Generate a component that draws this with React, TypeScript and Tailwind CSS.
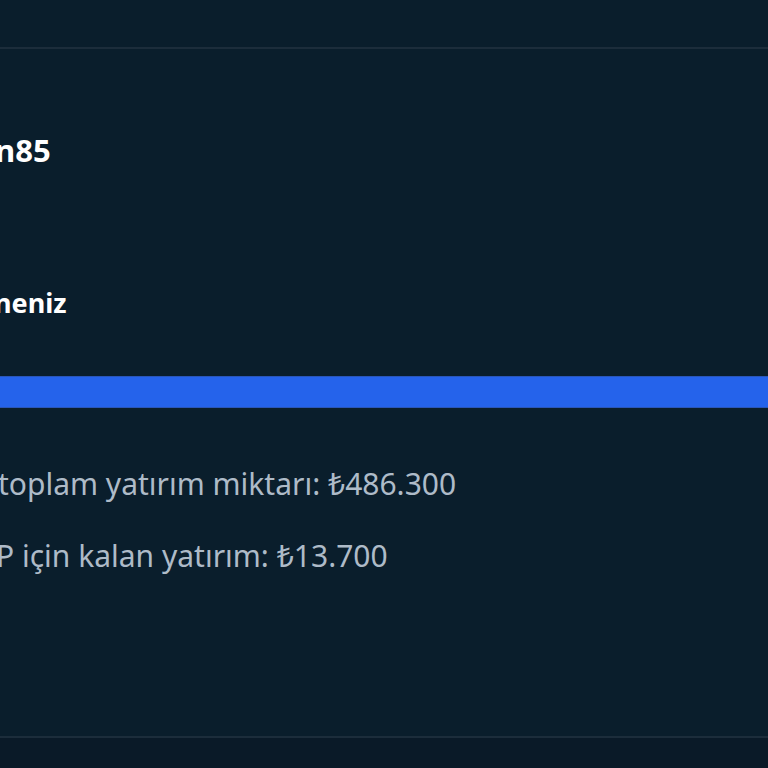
export default function App() {
  return (
    <div
      className="w-[768px] h-[768px] overflow-hidden bg-[#0a1e2c] flex flex-col"
      style={{ fontFamily: '"Noto Sans", "Open Sans", sans-serif' }}
    >
      <div className="h-[47px] shrink-0" />
      <div className="h-[2px] shrink-0 bg-[#1c2d3b]" />
      <div className="flex-1 flex flex-col overflow-hidden">
        <div className="pt-[79px] h-[128px] overflow-hidden">
          <div className="-ml-[5px] whitespace-nowrap text-[31px] leading-[44px] font-bold text-white">n85</div>
        </div>
        <div className="pt-[106px] h-[146px] overflow-hidden">
          <div className="-ml-[6px] whitespace-nowrap text-[27px] leading-[40px] font-bold text-white">neniz</div>
        </div>
        <div className="mt-[53px] h-[32px] shrink-0 bg-[#2563eb] border-y border-[#2a56b8]" />
        <div className="pt-[56px] overflow-hidden">
          <div className="-ml-[2px] whitespace-nowrap text-[30px] leading-[40px] text-[#aebbc8]">toplam yatırım miktarı: ₺486.300</div>
          <div className="mt-[32px] -ml-[4px] whitespace-nowrap text-[30px] leading-[40px] text-[#aebbc8]">P için kalan yatırım: ₺13.700</div>
        </div>
      </div>
      <div className="h-[2px] shrink-0 bg-[#1c2d3b]" />
      <div className="h-[30px] shrink-0 bg-[#0a1a28]" />
    </div>
  );
}
